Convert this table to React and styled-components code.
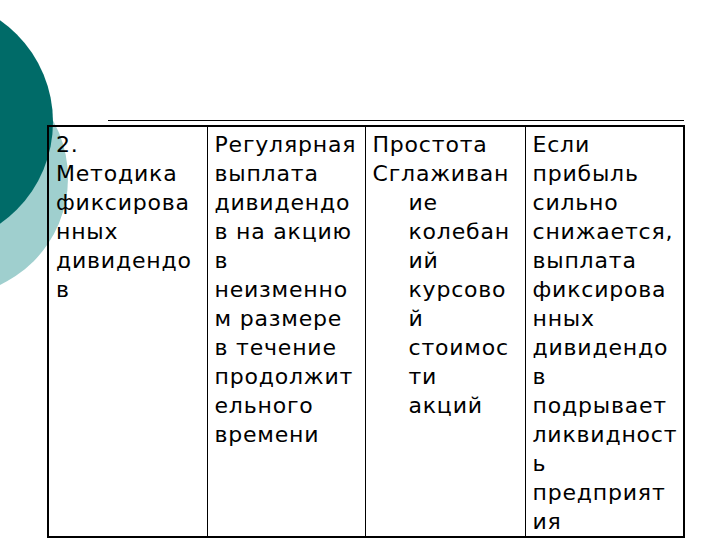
import React from "react";
import styled, { createGlobalStyle } from "styled-components";

const Global = createGlobalStyle`
  html, body { margin: 0; padding: 0; background: #ffffff; }
  body { font-family: "DejaVu Sans", Verdana, sans-serif; }
`;

const Slide = styled.div`
  position: relative;
  width: 720px;
  height: 540px;
  overflow: hidden;
  background: #ffffff;
  padding-top: 120px;
  box-sizing: border-box;
`;

const Circle = styled.div`
  position: absolute;
  border-radius: 50%;
  left: ${(p) => p.$cx - p.$r}px;
  top: ${(p) => p.$cy - p.$r}px;
  width: ${(p) => p.$r * 2}px;
  height: ${(p) => p.$r * 2}px;
  background: ${(p) => p.$color};
  z-index: 0;
`;

const Content = styled.div`
  position: relative;
  z-index: 1;
  display: flex;
  flex-direction: column;
`;

const TitleRule = styled.div`
  margin-left: 108px;
  width: 576px;
  height: 1px;
  background: #000000;
`;

const Table = styled.table`
  margin-top: 4px;
  margin-left: 47px;
  border-collapse: collapse;
  border: 2px solid #000000;
  table-layout: fixed;
  width: 638px;
`;

const Col = styled.col`
  width: ${(p) => p.$w}px;
`;

const Cell = styled.td`
  border: 1px solid #000000;
  vertical-align: top;
  padding: 3px 0 0 7px;
  font-family: "DejaVu Sans", Verdana, sans-serif;
  font-size: 22px;
  line-height: 29px;
  letter-spacing: 0.8px;
  color: #000000;
  white-space: nowrap;
  overflow: hidden;
`;

const Para = styled.div`
  padding-left: ${(p) => p.$hang || 0}px;
  text-indent: ${(p) => -(p.$hang || 0)}px;
`;

const Lines = ({ lines }) =>
  lines.map((l, i) => (
    <React.Fragment key={i}>
      {l}
      {i < lines.length - 1 && <br />}
    </React.Fragment>
  ));

export default function App() {
  return (
    <>
      <Global />
      <Slide>
        <Circle $cx={-50} $cy={178} $r={118} $color="#9fcfce" />
        <Circle $cx={-71} $cy={122} $r={124} $color="#006b68" />
        <Content>
          <TitleRule />
          <Table>
            <colgroup>
              <Col $w={159} />
              <Col $w={158} />
              <Col $w={160} />
              <Col $w={159} />
            </colgroup>
            <tbody>
              <tr>
                <Cell>
                  <Para>
                    <Lines
                      lines={["2.", "Методика", "фиксирова", "нных", "дивидендо", "в"]}
                    />
                  </Para>
                </Cell>
                <Cell>
                  <Para>
                    <Lines
                      lines={[
                        "Регулярная",
                        "выплата",
                        "дивидендо",
                        "в на акцию",
                        "в",
                        "неизменно",
                        "м размере",
                        "в течение",
                        "продолжит",
                        "ельного",
                        "времени",
                      ]}
                    />
                  </Para>
                </Cell>
                <Cell>
                  <Para>Простота</Para>
                  <Para $hang={36}>
                    <Lines
                      lines={[
                        "Сглаживан",
                        "ие",
                        "колебан",
                        "ий",
                        "курсово",
                        "й",
                        "стоимос",
                        "ти",
                        "акций",
                      ]}
                    />
                  </Para>
                </Cell>
                <Cell>
                  <Para>
                    <Lines
                      lines={[
                        "Если",
                        "прибыль",
                        "сильно",
                        "снижается,",
                        "выплата",
                        "фиксирова",
                        "нных",
                        "дивидендо",
                        "в",
                        "подрывает",
                        "ликвидност",
                        "ь",
                        "предприят",
                        "ия",
                      ]}
                    />
                  </Para>
                </Cell>
              </tr>
            </tbody>
          </Table>
        </Content>
      </Slide>
    </>
  );
}
